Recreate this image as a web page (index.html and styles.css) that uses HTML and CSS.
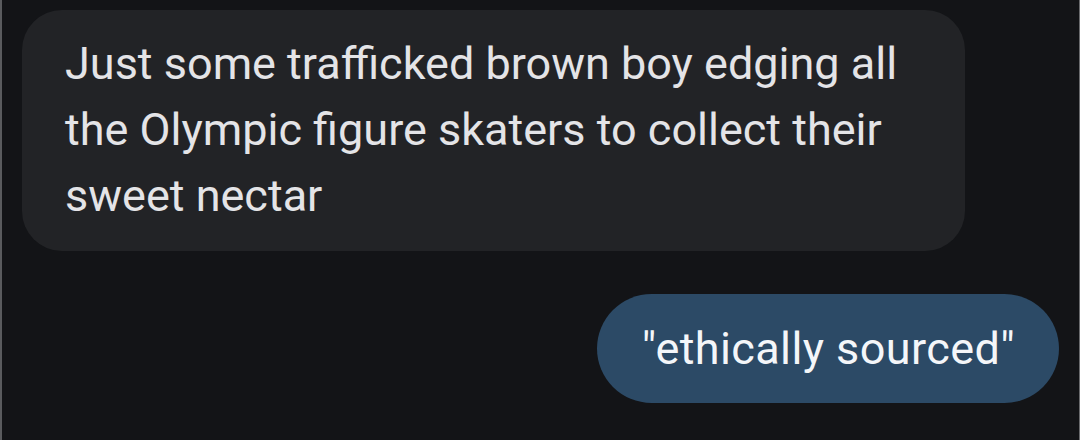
FILE: index.html
```html
<!DOCTYPE html>
<html lang="en">
<head>
    <title>Messages</title>
    <link rel="stylesheet" href="styles.css">
</head>
<body>
<div class="thread">
    <div class="bubble incoming">
        Just some trafficked brown boy edging all the Olympic figure skaters to collect their sweet nectar
    </div>
    <div class="bubble outgoing">"ethically sourced"</div>
</div>
</body>
</html>
```

FILE: styles.css
```css
html, body {
  margin: 0;
  height: 100%;
  background-color: #131417;
}
body {
  font-family: Roboto, "Noto Sans", Arial, sans-serif;
  color: #e4e4e7;
}
.thread {
  box-sizing: border-box;
  height: 440px;
  display: flex;
  flex-direction: column;
  align-items: flex-start;
  gap: 43px;
  padding: 10px 20px 0 20px;
  border-left: 2px solid #5a5b5e;
  border-right: 1px solid #6a6b6e;
}
.bubble {
  box-sizing: border-box;
  font-size: 45px;
  line-height: 66px;
}
.incoming {
  width: 943px;
  padding: 21px 50px 22px 43px;
  background-color: #222326;
  border-radius: 40px;
}
.outgoing {
  align-self: flex-end;
  height: 109px;
  line-height: 109px;
  padding: 0 44px 0 45px;
  background-color: #2c4a66;
  color: #f4f6f9;
  border-radius: 55px;
  letter-spacing: 0.4px;
}
```
